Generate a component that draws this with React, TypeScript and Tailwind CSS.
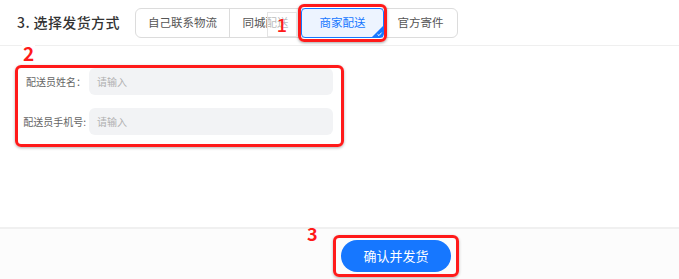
import React from 'react';

const font = { fontFamily: '"Noto Sans CJK SC", "Noto Sans", sans-serif' };

const tabs = [
  { label: '自己联系物流', w: 'w-[93px]' },
  { label: '同城配送', w: 'w-[72px]' },
  { label: '商家配送', w: 'w-[83px]', active: true },
  { label: '官方寄件', w: 'w-[73px]' },
];

const Field: React.FC<{ label: string }> = ({ label }) => (
  <div className="flex items-center">
    <span className="w-[71px] shrink-0 text-right text-[10px] text-[#666] whitespace-nowrap pr-[3px]">{label}</span>
    <div className="w-[244px] h-[27px] rounded-md bg-[#f2f3f5] flex items-center pl-[8px] text-[10px] text-[#b0b0b0]">
      请输入
    </div>
  </div>
);

export default function App() {
  return (
    <div className="relative w-full h-[279px] bg-white flex flex-col overflow-hidden" style={font}>
      {/* header */}
      <div className="h-[46px] border-b border-[#efefef] flex items-center shrink-0">
        <span className="ml-[17px] w-[118px] shrink-0 text-[14px] tracking-[0.4px] font-medium text-[#333]">3. 选择发货方式</span>
        <div className="relative flex h-[30px] border border-[#dcdcdc] rounded-md">
          {tabs.map((t, i) => (
            <div
              key={t.label}
              className={
                t.active
                  ? `relative ${t.w} -my-px flex items-center justify-center bg-[#edf4ff] border border-[#1677ff] text-[11.5px] text-[#1677ff] rounded-sm`
                  : `${t.w} flex items-center justify-center text-[11.5px] text-[#555] ${i > 0 && !tabs[i - 1].active ? 'border-l border-[#dcdcdc]' : ''}`
              }
            >
              {t.label}
              {t.active && (
                <>
                  <svg className="absolute right-0 bottom-0" width="11" height="11" viewBox="0 0 11 11">
                    <path d="M11 0 L11 11 L0 11 Z" fill="#1677ff" />
                    <path d="M5.5 8.3 L7 9.6 L9.6 6.6" stroke="#fff" strokeWidth="1" fill="none" />
                  </svg>
                  <div className="absolute -top-[5px] -bottom-[5px] -left-[4px] -right-[4px] border-[3px] border-[#ff1a1a] rounded-md shadow-[0_1px_3px_rgba(0,0,0,0.35)]" />
                </>
              )}
            </div>
          ))}
          <div className="absolute left-[131px] top-[3px] w-[30px] h-[25px] bg-white/60 border border-[#e4e4e4] flex items-center justify-center text-[18px] leading-none text-[#ff1a1a] font-medium">
            1
          </div>
        </div>
      </div>

      {/* form */}
      <div className="relative flex-1 pt-[19px] pl-[15px]">
        <span className="absolute left-[22px] top-[-3px] px-[1px] bg-white text-[19px] leading-none font-bold text-[#ff1a1a]">2</span>
        <div className="w-[329px] h-[82px] border-[3px] border-[#ff1a1a] rounded-md shadow-[0_1px_3px_rgba(0,0,0,0.3)] flex flex-col pt-0 gap-[13px]">
          <Field label="配送员姓名：" />
          <Field label="配送员手机号:" />
        </div>
      </div>

      {/* footer */}
      <div className="relative h-[52px] shrink-0 border-t-2 border-[#f0f0f0] bg-[#fcfcfc] pl-[333px] pt-[6px]">
        <span className="absolute left-[307px] -top-[5px] text-[18px] leading-none font-bold text-[#ff1a1a]">3</span>
        <div className="w-[126px] h-[42px] border-[3px] border-[#ff1a1a] rounded-md shadow-[0_1px_3px_rgba(0,0,0,0.3)] flex items-center justify-center">
          <button className="w-[110px] h-[32px] rounded-full bg-[#1677ff] text-white text-[13px]">确认并发货</button>
        </div>
      </div>
    </div>
  );
}
